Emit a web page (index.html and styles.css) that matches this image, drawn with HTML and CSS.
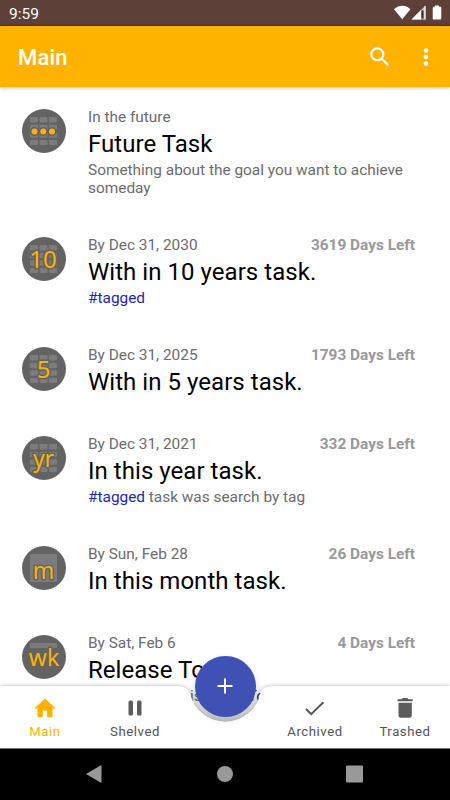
FILE: index.html
```
<!DOCTYPE html>
<html lang="en">
<head>
<meta charset="utf-8">
<title>Main</title>
<link rel="stylesheet" href="styles.css">
</head>
<body>
<svg width="0" height="0" class="defs">
  <defs>
    <g id="cells" fill="#7c7c7c">
      <rect x="8" y="8" width="8" height="5.5" rx="1"/><rect x="17.5" y="8" width="8" height="5.5" rx="1"/><rect x="27" y="8" width="8" height="5.5" rx="1"/>
      <rect x="8" y="15.7" width="8" height="5.5" rx="1"/><rect x="17.5" y="15.7" width="8" height="5.5" rx="1"/><rect x="27" y="15.7" width="8" height="5.5" rx="1"/>
      <rect x="8" y="23.3" width="8" height="5.5" rx="1"/><rect x="17.5" y="23.3" width="8" height="5.5" rx="1"/><rect x="27" y="23.3" width="8" height="5.5" rx="1"/>
      <rect x="8" y="31" width="8" height="5" rx="1"/><rect x="17.5" y="31" width="8" height="5" rx="1"/><rect x="27" y="31" width="8" height="5" rx="1"/>
    </g>
    <linearGradient id="shade" x1="0" y1="0" x2="0" y2="1"><stop offset=".45" stop-color="#000" stop-opacity="0"/><stop offset="1" stop-color="#000" stop-opacity=".15"/></linearGradient>
  </defs>
</svg>
<div class="screen">
  <header class="status">
    <span class="clock">9:59</span>
    <svg class="signals" width="50" height="16" viewBox="0 0 50 16">
      <path fill="#fff" d="M0 4.2C4.8-.4 11.800-.4 16.400 4.200L8.200 14.200z"/>
      <path fill="#c9c0bd" d="M17.500 14.500 31.500 0.500v14z"/>
      <path fill="#fff" d="M17.500 14.500 27 5v9.500z"/>
      <path fill="#3b211b" d="M27.500 5.500h2v8h-2z"/>
      <path fill="#fff" d="M30.500 1h1v13.500h-1z"/>
      <path fill="#fff" d="M41 .5h4v1.300h1.300q1 0 1 1v10.700q0 1-1 1h-6.600q-1 0-1-1V2.800q0-1 1-1H41z"/>
    </svg>
  </header>
  <div class="appbar">
    <h1>Main</h1>
    <svg class="search" width="26" height="26" viewBox="0 0 24 24"><path fill="#fff" d="M15.500 14h-.79l-.28-.27A6.471 6.471 0 0 0 16 9.500 6.500 6.500 0 1 0 9.500 16c1.610 0 3.090-.59 4.230-1.570l.27.28v.79l5 4.990L20.490 19l-4.990-5zm-6 0C7.010 14 5 11.990 5 9.500S7.010 5 9.500 5 14 7.010 14 9.500 11.990 14 9.500 14z"/></svg>
    <svg class="more" width="6" height="20" viewBox="0 0 6 20" fill="#fff"><circle cx="3" cy="2.500" r="2.300"/><circle cx="3" cy="9" r="2.300"/><circle cx="3" cy="15.500" r="2.300"/></svg>
  </div>
  <main class="list">
    <article class="task three">
      <svg class="badge" viewBox="0 0 44 44"><circle cx="22" cy="22" r="22" fill="#636363"/><use href="#cells"/>
        <g fill="#ffb300" stroke="#636363" stroke-width="3" paint-order="stroke"><circle cx="12.500" cy="22.500" r="3"/><circle cx="21.300" cy="22.500" r="3"/><circle cx="30" cy="22.500" r="3"/></g></svg>
      <div class="body"><div class="meta"><span>In the future</span></div><h2>Future Task</h2><p>Something about the goal you want to achieve someday</p></div>
    </article>
    <article class="task two">
      <svg class="badge" viewBox="0 0 44 44"><circle cx="22" cy="22" r="22" fill="#636363"/><use href="#cells"/><text x="21" y="31" font-size="24">10</text></svg>
      <div class="body"><div class="meta"><span>By Dec 31, 2030</span><b>3619 Days Left</b></div><h2>With in 10 years task.</h2><p><a>#tagged</a></p></div>
    </article>
    <article class="task one">
      <svg class="badge" viewBox="0 0 44 44"><circle cx="22" cy="22" r="22" fill="#636363"/><use href="#cells"/><text x="21.500" y="31" font-size="24">5</text></svg>
      <div class="body"><div class="meta"><span>By Dec 31, 2025</span><b>1793 Days Left</b></div><h2>With in 5 years task.</h2></div>
    </article>
    <article class="task two">
      <svg class="badge" viewBox="0 0 44 44"><circle cx="22" cy="22" r="22" fill="#636363"/><use href="#cells"/><text x="21.500" y="31" font-size="23">yr</text></svg>
      <div class="body"><div class="meta"><span>By Dec 31, 2021</span><b>332 Days Left</b></div><h2>In this year task.</h2><p><a>#tagged</a> task was search by tag</p></div>
    </article>
    <article class="task one">
      <svg class="badge" viewBox="0 0 44 44"><circle cx="22" cy="22" r="22" fill="#636363"/><path fill="#7c7c7c" d="M8 8h27v28H8z"/><text x="21.500" y="33" font-size="23">m</text></svg>
      <div class="body"><div class="meta"><span>By Sun, Feb 28</span><b>26 Days Left</b></div><h2>In this month task.</h2></div>
    </article>
    <article class="task two">
      <svg class="badge" viewBox="0 0 44 44"><circle cx="22" cy="22" r="22" fill="#636363"/><path fill="#7c7c7c" d="M8 8h27v5H8z"/><text x="22" y="31" font-size="23">wk</text></svg>
      <div class="body"><div class="meta"><span>By Sat, Feb 6</span><b>4 Days Left</b></div><h2>Release To</h2><p class="split"><span>is</span><a>To</a></p></div>
    </article>
  </main>
  <nav class="tabs">
    <svg class="tabs-bg" width="450" height="78" viewBox="0 0 450 78"><circle cx="225" cy="16" r="36" fill="url(#shade)"/><path class="sheet" fill="#fff" d="M0 16H177Q187 16 190 23A36 36 0 0 0 260.500 23Q263 16 273 16H450V78H0z"/></svg>
    <div class="tab active"><svg width="26" height="26" viewBox="0 0 24 24"><path fill="currentColor" d="M10 20.500v-6h4v6h4.200q.8 0 .8-.8V12.500h3L12 3.200 2 12.500h3v7.200q0 .8.800.8z"/></svg><span>Main</span></div>
    <div class="tab"><svg width="26" height="26" viewBox="0 0 26 26"><rect x="6.500" y="5.500" width="4.500" height="15" rx="1.500" fill="#5c5c5c"/><rect x="15" y="5.500" width="4.500" height="15" rx="1.500" fill="#5c5c5c"/></svg><span>Shelved</span></div>
    <div class="gap"></div>
    <div class="tab"><svg width="26" height="26" viewBox="0 0 26 26"><path fill="none" stroke="#555" stroke-width="2" d="M4 14 9.200 19.200 21.400 7.300"/></svg><span>Archived</span></div>
    <div class="tab"><svg width="26" height="26" viewBox="0 0 26 26"><path fill="#5c5c5c" d="M5.500 4.200h4.300l1-1.200h4.600l1 1.200h4.300v2h-15.200zM6.500 7.700h13.300V20.500q0 2.300-2.300 2.300H8.800Q6.500 22.800 6.500 20.500z"/></svg><span>Trashed</span></div>
    <div class="fab"><svg width="18" height="18" viewBox="0 0 18 18"><path stroke="#fff" stroke-width="2" d="M9 1.500v15M1.500 9h15"/></svg></div>
  </nav>
  <footer class="system">
    <svg width="18" height="20" viewBox="0 0 18 20"><path fill="#999" d="M0 9 14.500 .5q1-.5 1 .5v16q0 1-1 .5z"/></svg>
    <svg width="18" height="20" viewBox="0 0 18 20"><circle cx="9" cy="9" r="8" fill="#999"/></svg>
    <svg width="18" height="20" viewBox="0 0 18 20"><rect x="0" y=".6" width="17" height="17" rx="1" fill="#999"/></svg>
  </footer>
</div>
</body>
</html>
```
FILE: styles.css
```
* { box-sizing: border-box; }
body { margin: 0; font-family: Roboto, sans-serif; background: #fff; }
.defs { position: absolute; }
svg { display: block; flex: none; }
.screen { width: 450px; height: 800px; overflow: hidden; display: flex; flex-direction: column; }
.status { height: 26px; flex: none; background: #5d4037; border-bottom: 1px solid #4b352e; display: flex; align-items: center; justify-content: space-between; padding: 2px 7px 0 9px; color: #fff; }
.clock { font-size: 15.5px; }
.signals { margin-right: -1px; margin-top: -1px; }
.appbar { height: 61px; flex: none; background: #ffb300; display: flex; align-items: center; padding: 2px 21px 0 18px; color: #fff; box-shadow: 0 1px 4px rgba(0,0,0,.25); z-index: 1; }
.appbar h1 { margin: 0; font-size: 22px; font-weight: 500; flex: 1; letter-spacing: .2px; }
.search { margin-right: 30px; margin-top: -1px; }
.list { flex: none; height: 645px; padding-top: 17px; margin-bottom: -46px; }
.task { display: flex; padding: 5px 35px 0 22px; }
.three { height: 128px; }
.two { height: 110.300px; }
.one { height: 88.700px; }
.badge { width: 44px; height: 44px; }
.badge text { font-family: "Noto Sans", sans-serif; fill: #ffb300; stroke: #636363; stroke-width: 3px; stroke-linejoin: round; paint-order: stroke; text-anchor: middle; }
.body { flex: 1; margin-left: 22px; color: #6c6c6c; font-size: 15.400px; }
.meta { display: flex; justify-content: space-between; line-height: 18px; margin-top: -1.300px; }
.meta b { font-weight: 700; color: #999; }
.body h2 { margin: 4px 0 0; font-weight: 400; font-size: 24px; line-height: 28px; color: #000; letter-spacing: .04px; }
.body p { margin: 3.300px 0 0; line-height: 18px; }
.body a { color: #1a2aa8; }
.body .split { display: flex; padding-left: 102px; gap: 46px; }
.tabs { height: 62px; flex: none; position: relative; display: flex; z-index: 2; }
.tabs-bg { position: absolute; left: 0; top: -16px; }
.sheet { filter: drop-shadow(0 0 2px rgba(0,0,0,.3)); }
.tab { width: 90px; position: relative; display: flex; flex-direction: column; align-items: center; padding-top: 9px; color: #555; font-size: 13.200px; letter-spacing: .55px; line-height: 16px; }
.tab span { margin-top: 3px; }
.active { color: #ffb300; }
.gap { width: 90px; }
.fab { position: absolute; left: 194.500px; top: -30.500px; width: 61px; height: 61px; border-radius: 50%; background: #3f51b5; display: flex; align-items: center; justify-content: center; box-shadow: 0 3px 6px rgba(0,0,0,.15); }
.system { height: 52px; flex: none; background: #000; border-top: 1px solid #777; display: flex; align-items: center; justify-content: space-between; padding: 0 86px 0 86px; }
```
